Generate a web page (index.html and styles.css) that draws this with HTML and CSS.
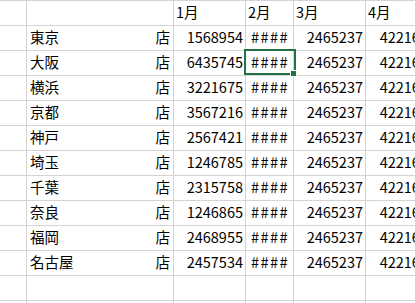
FILE: index.html
```html
<!DOCTYPE html>
<html lang="ja">
<head>
<meta charset="utf-8">
<link rel="stylesheet" href="styles.css">
</head>
<body>
<div class="sheet">
  <div class="grid">
    <div class="c"></div><div class="c"></div><div class="c">1月</div><div class="c">2月</div><div class="c">3月</div><div class="c">4月</div>
    <div class="c"></div><div class="c name"><span>東京</span><span>店</span></div><div class="c num">1568954</div><div class="c hash">####</div><div class="c num">2465237</div><div class="c num">4221637</div>
    <div class="c"></div><div class="c name"><span>大阪</span><span>店</span></div><div class="c num">6435745</div><div class="c hash">####</div><div class="c num">2465237</div><div class="c num">4221637</div>
    <div class="c"></div><div class="c name"><span>横浜</span><span>店</span></div><div class="c num">3221675</div><div class="c hash">####</div><div class="c num">2465237</div><div class="c num">4221637</div>
    <div class="c"></div><div class="c name"><span>京都</span><span>店</span></div><div class="c num">3567216</div><div class="c hash">####</div><div class="c num">2465237</div><div class="c num">4221637</div>
    <div class="c"></div><div class="c name"><span>神戸</span><span>店</span></div><div class="c num">2567421</div><div class="c hash">####</div><div class="c num">2465237</div><div class="c num">4221637</div>
    <div class="c"></div><div class="c name"><span>埼玉</span><span>店</span></div><div class="c num">1246785</div><div class="c hash">####</div><div class="c num">2465237</div><div class="c num">4221637</div>
    <div class="c"></div><div class="c name"><span>千葉</span><span>店</span></div><div class="c num">2315758</div><div class="c hash">####</div><div class="c num">2465237</div><div class="c num">4221637</div>
    <div class="c"></div><div class="c name"><span>奈良</span><span>店</span></div><div class="c num">1246865</div><div class="c hash">####</div><div class="c num">2465237</div><div class="c num">4221637</div>
    <div class="c"></div><div class="c name"><span>福岡</span><span>店</span></div><div class="c num">2468955</div><div class="c hash">####</div><div class="c num">2465237</div><div class="c num">4221637</div>
    <div class="c"></div><div class="c name"><span>名古屋</span><span>店</span></div><div class="c num">2457534</div><div class="c hash">####</div><div class="c num">2465237</div><div class="c num">4221637</div>
    <div class="c"></div><div class="c"></div><div class="c"></div><div class="c"></div><div class="c"></div><div class="c"></div>
    <div class="c"></div><div class="c"></div><div class="c"></div><div class="c"></div><div class="c"></div><div class="c"></div>
  </div>
  <div class="selection"><div class="handle"></div></div>
</div>
</body>
</html>
```
FILE: styles.css
```css
html, body {
  margin: 0;
  padding: 0;
  background: #ffffff;
  overflow: hidden;
}
.sheet {
  position: relative;
  width: 415px;
  height: 303px;
  overflow: hidden;
  font-family: "Noto Sans CJK JP", "Noto Sans", sans-serif;
  font-size: 14.5px;
  color: #000000;
}
.grid {
  display: grid;
  grid-template-columns: 27px 147px 72px 48px 72px 73px;
  grid-auto-rows: 25px;
  border-top: 1px solid #d4d4d4;
  width: 439px;
}
.c {
  border-right: 1px solid #d4d4d4;
  border-bottom: 1px solid #d4d4d4;
  line-height: 22px;
  padding: 0 2px;
  white-space: nowrap;
  overflow: hidden;
}
.name {
  display: flex;
  justify-content: space-between;
  padding: 0 3px 0 3px;
}
.num {
  text-align: right;
}
.hash {
  text-align: center;
  letter-spacing: 1.5px;
  padding-left: 3px;
}
.selection {
  position: absolute;
  left: 244px;
  top: 49px;
  width: 52px;
  height: 26px;
  box-sizing: border-box;
  border: 2px solid #217346;
}
.handle {
  position: absolute;
  right: -3px;
  bottom: -4px;
  width: 5px;
  height: 5px;
  background: #217346;
  border: 1px solid #ffffff;
}
```
